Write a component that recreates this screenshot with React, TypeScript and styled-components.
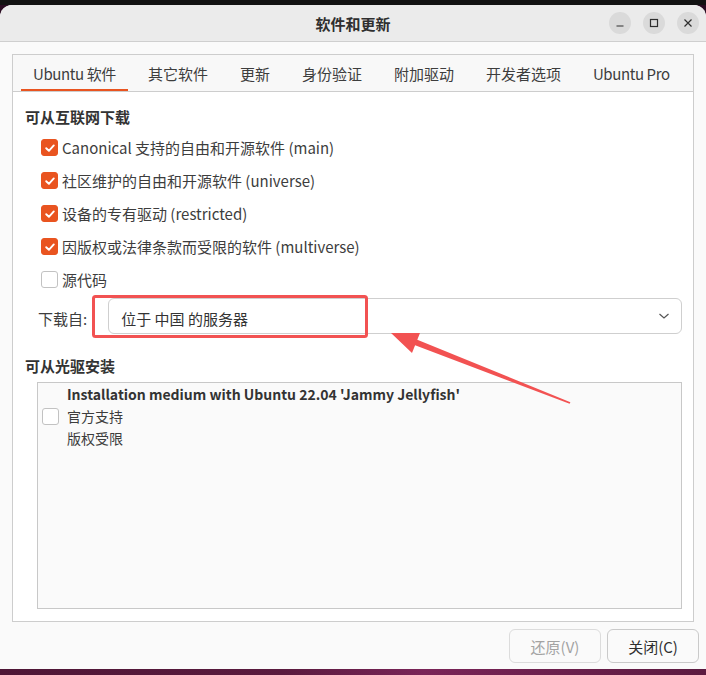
import styled, { createGlobalStyle } from "styled-components";

const GlobalStyle = createGlobalStyle`
  html, body {
    margin: 0;
    padding: 0;
    overflow: hidden;
  }
  body {
    font-family: "Noto Sans CJK SC", "Noto Sans", sans-serif;
    color: #3d3d3d;
  }
`;

const tabs = ["Ubuntu 软件", "其它软件", "更新", "身份验证", "附加驱动", "开发者选项", "Ubuntu Pro"];

const sources = [
  { label: "Canonical 支持的自由和开源软件 (main)", checked: true },
  { label: "社区维护的自由和开源软件 (universe)", checked: true },
  { label: "设备的专有驱动 (restricted)", checked: true },
  { label: "因版权或法律条款而受限的软件 (multiverse)", checked: true },
  { label: "源代码", checked: false },
];

const CheckBox: React.FC<{ checked: boolean }> = ({ checked }) => (
  <Box $checked={checked}>
    {checked && (
      <svg width="12" height="12" viewBox="0 0 12 12">
        <polyline
          points="2.2,6.2 4.9,8.8 9.8,3.4"
          fill="none"
          stroke="#fff"
          strokeWidth="1.9"
          strokeLinecap="round"
          strokeLinejoin="round"
        />
      </svg>
    )}
  </Box>
);

const App: React.FC = () => {
  return (
    <Screen>
      <GlobalStyle />
      <TopStrip />
      <Window>
        <TitleBar>
          <Title>软件和更新</Title>
          <Controls>
            <CtrlButton>
              <svg width="10" height="10" viewBox="0 0 10 10">
                <line x1="1.5" y1="8" x2="8.5" y2="8" stroke="#2e2e2e" strokeWidth="1.2" />
              </svg>
            </CtrlButton>
            <CtrlButton>
              <svg width="10" height="10" viewBox="0 0 10 10">
                <rect x="1.5" y="1.5" width="7" height="7" fill="none" stroke="#2e2e2e" strokeWidth="1.2" />
              </svg>
            </CtrlButton>
            <CtrlButton>
              <svg width="10" height="10" viewBox="0 0 10 10">
                <path d="M1.5 1.5 L8.5 8.5 M8.5 1.5 L1.5 8.5" stroke="#2e2e2e" strokeWidth="1.2" />
              </svg>
            </CtrlButton>
          </Controls>
        </TitleBar>

        <Body>
          <Notebook>
            <TabBar>
              {tabs.map((t, i) => (
                <Tab key={t} $active={i === 0} $latin={t.startsWith("Ubuntu")}>
                  {t}
                </Tab>
              ))}
            </TabBar>

            <Content>
              <Heading>可从互联网下载</Heading>
              {sources.map((s) => (
                <CheckRow key={s.label}>
                  <CheckBox checked={s.checked} />
                  <span>{s.label}</span>
                </CheckRow>
              ))}

              <ComboRow>
                <ComboLabel>下载自:</ComboLabel>
                <Combo>
                  <span>位于 中国 的服务器</span>
                  <svg width="12" height="8" viewBox="0 0 12 8">
                    <polyline points="1.5,2 6,6 10.5,2" fill="none" stroke="#555" strokeWidth="1.2" />
                  </svg>
                </Combo>
              </ComboRow>

              <Heading $spaced>可从光驱安装</Heading>
              <ListBox>
                <MediaRow>
                  <CheckBox checked={false} />
                  <MediaText>
                    <MediaTitle>Installation medium with Ubuntu 22.04 'Jammy Jellyfish'</MediaTitle>
                    <div>官方支持</div>
                    <div>版权受限</div>
                  </MediaText>
                </MediaRow>
              </ListBox>
            </Content>
          </Notebook>

          <ButtonRow>
            <DialogButton disabled>还原(V)</DialogButton>
            <DialogButton>关闭(C)</DialogButton>
          </ButtonRow>
        </Body>
      </Window>
      <Dock />

      <Annotation viewBox="0 0 706 675" width="706" height="675">
        <rect x="93.5" y="296.5" width="273" height="40" rx="2" fill="none" stroke="#f25252" strokeWidth="3" />
        <polygon
          points="391,333 420,333 417.3,339.7 570.4,402.2 569.6,403.8 415.1,345.3 412,353"
          fill="#f25252"
        />
      </Annotation>
    </Screen>
  );
};

export default App;

const Screen = styled.div`
  position: relative;
  width: 706px;
  height: 675px;
  display: flex;
  flex-direction: column;
  background: #2a0c22;
  overflow: hidden;
`;

const TopStrip = styled.div`
  height: 5px;
  background: #121212;
  flex-shrink: 0;
`;

const Window = styled.div`
  flex: 1;
  display: flex;
  flex-direction: column;
  background: #fafafa;
  border-radius: 12px 12px 0 0;
  overflow: hidden;
`;

const TitleBar = styled.div`
  position: relative;
  height: 36px;
  flex-shrink: 0;
  display: flex;
  align-items: center;
  justify-content: center;
  background: #ebebeb;
  border-bottom: 1px solid #cfcfcf;
`;

const Title = styled.div`
  font-size: 15px;
  font-weight: 700;
  color: #2f2f2f;
`;

const Controls = styled.div`
  position: absolute;
  right: 7px;
  top: 7px;
  display: flex;
  gap: 12px;
`;

const CtrlButton = styled.div`
  width: 22px;
  height: 22px;
  border-radius: 50%;
  background: #dadada;
  display: flex;
  align-items: center;
  justify-content: center;
`;

const Body = styled.div`
  flex: 1;
  display: flex;
  flex-direction: column;
  padding: 12px 12px 6px;
`;

const Notebook = styled.div`
  flex: 1;
  display: flex;
  flex-direction: column;
  border: 1px solid #cdcdcd;
  background: #ffffff;
`;

const TabBar = styled.div`
  height: 36px;
  display: flex;
  gap: 8px;
  padding-left: 8px;
  background: #f8f8f8;
  border-bottom: 1px solid #cdcdcd;
`;

const Tab = styled.div<{ $active?: boolean; $latin?: boolean }>`
  height: 36px;
  padding: 0 12px;
  display: flex;
  align-items: center;
  font-size: 15px;
  letter-spacing: ${(p) => (p.$latin ? "-0.4px" : "0")};
  color: #3d3d3d;
  white-space: nowrap;
  box-shadow: ${(p) => (p.$active ? "inset 0 -2px 0 #e95420" : "none")};
`;

const Content = styled.div`
  flex: 1;
  display: flex;
  flex-direction: column;
  padding: 15px 11px 12px 12px;
`;

const Heading = styled.div<{ $spaced?: boolean }>`
  font-size: 15px;
  font-weight: 700;
  line-height: 20px;
  color: #333;
  margin-top: ${(p) => (p.$spaced ? "22px" : "0")};
  margin-bottom: ${(p) => (p.$spaced ? "6px" : "4px")};
`;

const CheckRow = styled.div`
  height: 33px;
  display: flex;
  align-items: center;
  gap: 4px;
  padding-left: 16px;
  font-size: 15px;
  color: #3d3d3d;
`;

const Box = styled.span<{ $checked: boolean }>`
  width: 17px;
  height: 17px;
  box-sizing: border-box;
  border-radius: 3px;
  flex-shrink: 0;
  display: inline-flex;
  align-items: center;
  justify-content: center;
  background: ${(p) => (p.$checked ? "#e95420" : "#ffffff")};
  border: 1px solid ${(p) => (p.$checked ? "#e95420" : "#c2c2c2")};
`;

const ComboRow = styled.div`
  margin-top: 2px;
  height: 36px;
  display: flex;
  align-items: center;
  padding-left: 13px;
  gap: 21px;
`;

const ComboLabel = styled.span`
  font-size: 15px;
  color: #3d3d3d;
  padding-top: 5px;
`;

const Combo = styled.div`
  flex: 1;
  height: 36px;
  box-sizing: border-box;
  border: 1px solid #cfcfcf;
  border-radius: 6px;
  background: #ffffff;
  display: flex;
  align-items: center;
  justify-content: space-between;
  padding: 4px 11px 0 12px;
  font-size: 15px;
  color: #333;

  svg {
    margin-top: -4px;
  }
`;

const ListBox = styled.div`
  flex: 1;
  margin-left: 12px;
  border: 1px solid #c8c8c8;
  background: #fafafa;
`;

const MediaRow = styled.div`
  display: flex;
  align-items: center;
  gap: 8px;
  padding-left: 4px;
`;

const MediaText = styled.div`
  display: flex;
  flex-direction: column;
  font-size: 14px;
  line-height: 22px;
  color: #3d3d3d;
`;

const MediaTitle = styled.div`
  font-weight: 700;
  color: #333;
`;

const ButtonRow = styled.div`
  margin-top: 7px;
  margin-right: -5px;
  display: flex;
  justify-content: flex-end;
  gap: 6px;
`;

const DialogButton = styled.button`
  width: 92px;
  height: 34px;
  border-radius: 6px;
  border: 1px solid ${(p) => (p.disabled ? "#dcdcdc" : "#cacaca")};
  background: #fafafa;
  color: ${(p) => (p.disabled ? "#a3a3a3" : "#2f2f2f")};
  font-family: "Noto Sans CJK SC", "Noto Sans", sans-serif;
  font-size: 15px;
  padding: 0;
`;

const Dock = styled.div`
  height: 6px;
  flex-shrink: 0;
  background: linear-gradient(90deg, #4e1636 0%, #5a1a3e 40%, #7a2458 60%, #5c1a40 100%);
`;

const Annotation = styled.svg`
  position: absolute;
  left: 0;
  top: 0;
  pointer-events: none;
`;
